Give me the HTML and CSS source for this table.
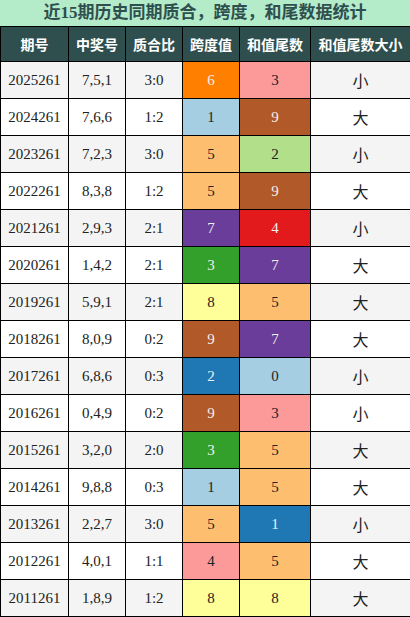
FILE: index.html
```html
<!DOCTYPE html>
<html lang="zh">
<head>
  <meta charset="UTF-8">
  <meta name="viewport" content="width=device-width, initial-scale=1.0">
  <title>同期质合跨度统计</title>
  <link rel="stylesheet" href="styles.css">
</head>
<body>
<div class="title">近15期历史同期质合，跨度，和尾数据统计</div>
<table class="stats">
  <colgroup>
    <col class="w-issue">
    <col class="w-nums">
    <col class="w-ratio">
    <col class="w-span">
    <col class="w-tail">
    <col class="w-size">
  </colgroup>
  <thead>
    <tr>
      <th>期号</th>
      <th>中奖号</th>
      <th>质合比</th>
      <th>跨度值</th>
      <th>和值尾数</th>
      <th>和值尾数大小</th>
    </tr>
  </thead>
  <tbody>
    <tr><td>2025261</td><td>7,5,1</td><td>3:0</td><td class="c-orange">6</td><td class="c-pink">3</td><td class="size">小</td></tr>
    <tr><td>2024261</td><td>7,6,6</td><td>1:2</td><td class="c-lblue">1</td><td class="c-brown">9</td><td class="size">大</td></tr>
    <tr><td>2023261</td><td>7,2,3</td><td>3:0</td><td class="c-peach">5</td><td class="c-lgreen">2</td><td class="size">小</td></tr>
    <tr><td>2022261</td><td>8,3,8</td><td>1:2</td><td class="c-peach">5</td><td class="c-brown">9</td><td class="size">大</td></tr>
    <tr><td>2021261</td><td>2,9,3</td><td>2:1</td><td class="c-purple">7</td><td class="c-red">4</td><td class="size">小</td></tr>
    <tr><td>2020261</td><td>1,4,2</td><td>2:1</td><td class="c-green">3</td><td class="c-purple">7</td><td class="size">大</td></tr>
    <tr><td>2019261</td><td>5,9,1</td><td>2:1</td><td class="c-yellow">8</td><td class="c-peach">5</td><td class="size">大</td></tr>
    <tr><td>2018261</td><td>8,0,9</td><td>0:2</td><td class="c-brown">9</td><td class="c-purple">7</td><td class="size">大</td></tr>
    <tr><td>2017261</td><td>6,8,6</td><td>0:3</td><td class="c-blue">2</td><td class="c-lblue">0</td><td class="size">小</td></tr>
    <tr><td>2016261</td><td>0,4,9</td><td>0:2</td><td class="c-brown">9</td><td class="c-pink">3</td><td class="size">小</td></tr>
    <tr><td>2015261</td><td>3,2,0</td><td>2:0</td><td class="c-green">3</td><td class="c-peach">5</td><td class="size">大</td></tr>
    <tr><td>2014261</td><td>9,8,8</td><td>0:3</td><td class="c-lblue">1</td><td class="c-peach">5</td><td class="size">大</td></tr>
    <tr><td>2013261</td><td>2,2,7</td><td>3:0</td><td class="c-peach">5</td><td class="c-blue">1</td><td class="size">小</td></tr>
    <tr><td>2012261</td><td>4,0,1</td><td>1:1</td><td class="c-pink">4</td><td class="c-peach">5</td><td class="size">大</td></tr>
    <tr><td>2011261</td><td>1,8,9</td><td>1:2</td><td class="c-yellow">8</td><td class="c-yellow">8</td><td class="size">大</td></tr>
  </tbody>
</table>
</body>
</html>
```

FILE: styles.css
```css
body {
  margin: 0;
  background-color: #FFFFFF;
  font-family: 'Liberation Serif', 'Noto Sans CJK SC', serif;
}

.title {
  height: 26px;
  line-height: 26px;
  background-color: #B4EBC9;
  color: #2F4F4F;
  font-size: 17px;
  font-weight: bold;
  text-align: center;
}

.stats {
  width: 410px;
  table-layout: fixed;
  border-collapse: collapse;
}

.w-issue { width: 68px; }
.w-nums { width: 57px; }
.w-ratio { width: 57px; }
.w-span { width: 57px; }
.w-tail { width: 71px; }
.w-size { width: 100px; }

.stats th, .stats td {
  border: 1px solid #000000;
  padding: 0;
  text-align: center;
}

.stats th {
  height: 34px;
  background-color: #2F4F4F;
  color: #FFFFFF;
  font-family: 'Noto Sans CJK SC', sans-serif;
  font-size: 14px;
  font-weight: bold;
}

.stats td {
  height: 36px;
  color: #222222;
  font-size: 15px;
}

.stats tbody tr:nth-child(odd) {
  background-color: #F4F4F4;
}

.stats tbody tr:nth-child(even) {
  background-color: #FFFFFF;
}

.stats td.size {
  font-family: 'Noto Sans CJK SC', sans-serif;
  font-size: 16px;
}

/* colour per digit cell */
.c-orange { background-color: #FF7F00; }
.c-pink { background-color: #FB9A99; }
.c-lblue { background-color: #A6CEE3; }
.c-brown { background-color: #B15928; }
.c-peach { background-color: #FDBF6F; }
.c-lgreen { background-color: #B2DF8A; }
.c-purple { background-color: #6A3D9A; }
.c-red { background-color: #E31A1C; }
.c-green { background-color: #33A02C; }
.c-yellow { background-color: #FFFF99; }
.c-blue { background-color: #1F78B4; }

.stats td.c-orange,
.stats td.c-brown,
.stats td.c-purple,
.stats td.c-red,
.stats td.c-green,
.stats td.c-blue {
  color: #F0F0F0;
}
```
